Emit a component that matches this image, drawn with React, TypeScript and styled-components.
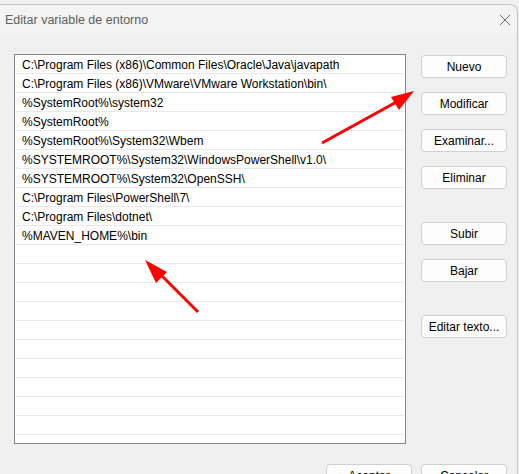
import styled, { createGlobalStyle } from "styled-components";

const paths = [
  "C:\\Program Files (x86)\\Common Files\\Oracle\\Java\\javapath",
  "C:\\Program Files (x86)\\VMware\\VMware Workstation\\bin\\",
  "%SystemRoot%\\system32",
  "%SystemRoot%",
  "%SystemRoot%\\System32\\Wbem",
  "%SYSTEMROOT%\\System32\\WindowsPowerShell\\v1.0\\",
  "%SYSTEMROOT%\\System32\\OpenSSH\\",
  "C:\\Program Files\\PowerShell\\7\\",
  "C:\\Program Files\\dotnet\\",
  "%MAVEN_HOME%\\bin",
];

const EMPTY_ROWS = 11;

const sideButtons = [
  { label: "Nuevo", space: 0 },
  { label: "Modificar", space: 14 },
  { label: "Examinar...", space: 14 },
  { label: "Eliminar", space: 14 },
  { label: "Subir", space: 33 },
  { label: "Bajar", space: 14 },
  { label: "Editar texto...", space: 33 },
];

const App = () => {
  return (
    <>
      <GlobalStyle />
      <Window>
        <TitleBar>
          <Title>Editar variable de entorno</Title>
          <CloseIcon width="12" height="12" viewBox="0 0 12 12">
            <path d="M1 1 L11 11 M11 1 L1 11" stroke="#707070" strokeWidth="1" fill="none" />
          </CloseIcon>
        </TitleBar>
        <Body>
          <MainRow>
            <ListBox>
              {paths.map((p) => (
                <Row key={p}>{p}</Row>
              ))}
              {Array.from({ length: EMPTY_ROWS }).map((_, i) => (
                <Row key={"empty" + i} />
              ))}
            </ListBox>
            <ButtonColumn>
              {sideButtons.map((b) => (
                <Button key={b.label} space={b.space}>
                  {b.label}
                </Button>
              ))}
            </ButtonColumn>
          </MainRow>
          <Footer>
            <Button space={0}>Aceptar</Button>
            <Button space={0}>Cancelar</Button>
          </Footer>
        </Body>
        <Annotations width="519" height="474" viewBox="0 0 519 474">
          <line x1="322" y1="143" x2="400" y2="100" stroke="#ff0000" strokeWidth="3" />
          <polygon points="414,91 391,97 399,110" fill="#ff0000" />
          <line x1="198" y1="312" x2="158" y2="272" stroke="#ff0000" strokeWidth="3" />
          <polygon points="145,260 167,272 156,283" fill="#ff0000" />
        </Annotations>
      </Window>
    </>
  );
};

export default App;

const GlobalStyle = createGlobalStyle`
  html, body {
    margin: 0;
    padding: 0;
    background: #f0f0f0;
    overflow: hidden;
  }
  body {
    font-family: "Liberation Sans", Arial, sans-serif;
    font-size: 12px;
  }
`;

const Window = styled.div`
  position: relative;
  margin-top: 4px;
  width: 517px;
  height: 470px;
  border-top: 1px solid #c4c4c4;
  border-right: 1px solid #c4c4c4;
  border-top-right-radius: 8px;
  background: #f0f0f0;
`;

const TitleBar = styled.div`
  height: 30px;
  display: flex;
  align-items: center;
  justify-content: space-between;
  padding: 0 6px 0 5px;
  background: #f3f3f3;
  border-top-right-radius: 8px;
`;

const Title = styled.span`
  color: #606060;
  font-size: 12.5px;
`;

const CloseIcon = styled.svg`
  display: block;
  margin-top: -1px;
`;

const Body = styled.div`
  padding: 19px 10px 0 14px;
`;

const MainRow = styled.div`
  display: flex;
  align-items: flex-start;
  gap: 15px;
`;

const ListBox = styled.div`
  width: 390px;
  height: 388px;
  border: 1px solid #828790;
  background: #fff;
  overflow: hidden;
`;

const Row = styled.div`
  height: 18px;
  line-height: 20px;
  overflow: hidden;
  margin: 0 1px;
  padding-left: 6px;
  border-bottom: 1px solid #e9e9e9;
  color: #000;
  white-space: nowrap;
`;

const ButtonColumn = styled.div`
  display: flex;
  flex-direction: column;
  padding-top: 1px;
`;

const Button = styled.button<{ space: number }>`
  width: 86px;
  height: 23px;
  margin-top: ${({ space }) => space}px;
  padding: 0;
  border: 1px solid #d0d0d0;
  border-radius: 4px;
  background: #fdfdfd;
  color: #000;
  font-family: "Liberation Sans", Arial, sans-serif;
  font-size: 12px;
`;

const Footer = styled.div`
  display: flex;
  justify-content: flex-end;
  gap: 9px;
  margin-top: 20px;
`;

const Annotations = styled.svg`
  position: absolute;
  top: -5px;
  left: 0;
  pointer-events: none;
`;
